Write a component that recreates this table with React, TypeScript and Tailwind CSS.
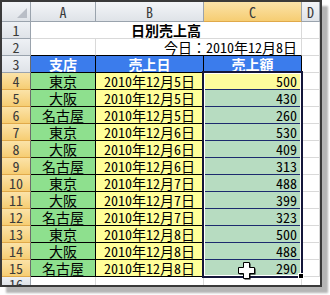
import React from 'react';

type Row = { n: number; shop: string; date: string; amount: number };

const rows: Row[] = [
  { n: 4, shop: '東京', date: '2010年12月5日', amount: 500 },
  { n: 5, shop: '大阪', date: '2010年12月5日', amount: 430 },
  { n: 6, shop: '名古屋', date: '2010年12月5日', amount: 260 },
  { n: 7, shop: '東京', date: '2010年12月6日', amount: 530 },
  { n: 8, shop: '大阪', date: '2010年12月6日', amount: 409 },
  { n: 9, shop: '名古屋', date: '2010年12月6日', amount: 313 },
  { n: 10, shop: '東京', date: '2010年12月7日', amount: 488 },
  { n: 11, shop: '大阪', date: '2010年12月7日', amount: 399 },
  { n: 12, shop: '名古屋', date: '2010年12月7日', amount: 323 },
  { n: 13, shop: '東京', date: '2010年12月8日', amount: 500 },
  { n: 14, shop: '大阪', date: '2010年12月8日', amount: 488 },
  { n: 15, shop: '名古屋', date: '2010年12月8日', amount: 290 },
];

const colHead = 'flex items-center justify-center border-r border-b border-[#9aa3ad] bg-gradient-to-b from-[#f3f5f8] to-[#dfe3e8] text-[#3a3a3a] text-[14px]';
const rowHead = 'flex items-center justify-center border-r border-b border-[#9aa3ad] bg-gradient-to-b from-[#eef1f5] to-[#dfe3e8] text-[#3a3a3a] text-[14px]';
const rowHeadSel = 'flex items-center justify-center border-r border-b border-r-[#6b6b6b] border-b-[#e0a94a] bg-gradient-to-b from-[#fbe3a8] to-[#f6cd72] text-[#3a3a3a] text-[14px]';
const grid = 'border-r border-b border-[#d9d9d9] bg-white';

const App: React.FC = () => {
  return (
    <div className="w-[330px] h-[295px] bg-white overflow-hidden [font-family:'Noto_Sans_CJK_JP',sans-serif] [font-feature-settings:'hwid'] leading-none text-black">
      <div className="w-[322px] h-[287px] border-2 border-[#3a3a3a] shadow-[6px_6px_2px_#b5b5b5] bg-white overflow-hidden">
        <div className="relative grid grid-cols-[29px_65px_108px_98px_18px] grid-rows-[20px_repeat(15,17px)_8px] overflow-hidden">
          {/* column headers */}
          <div className="relative border-r border-b border-[#9aa3ad] bg-gradient-to-b from-[#f3f5f8] to-[#dfe3e8]">
            <svg className="absolute right-[3px] bottom-[3px]" width="10" height="10" viewBox="0 0 10 10">
              <polygon points="10,0 10,10 0,10" fill="#b9bec6" />
            </svg>
          </div>
          <div className={colHead}>A</div>
          <div className={colHead}>B</div>
          <div className="flex items-center justify-center border-r border-b border-r-[#9aa3ad] border-b-[#e0a94a] bg-gradient-to-b from-[#fbe3a8] to-[#f6cd72] text-[#3a3a3a] text-[14px]">C</div>
          <div className={colHead}>D</div>

          {/* row 1 */}
          <div className={rowHead}>1</div>
          <div className={`${grid} col-span-3 flex items-center justify-center font-bold text-[14px]`}>日別売上高</div>
          <div className={grid}></div>

          {/* row 2 */}
          <div className={rowHead}>2</div>
          <div className="border-r border-r-[#d9d9d9] border-b border-b-black bg-white"></div>
          <div className="col-span-2 border-r border-r-[#d9d9d9] border-b border-b-black bg-white flex items-center justify-end pr-[4px] text-[14px]">
            今日<span className="[font-feature-settings:normal]">：</span>2010年12月8日
          </div>
          <div className={grid}></div>

          {/* row 3 */}
          <div className={`${rowHead} border-r-[#6b6b6b]`}>3</div>
          <div className="border-r border-b border-black bg-[#3b7cec] text-white font-bold text-[14px] flex items-center justify-center">支店</div>
          <div className="border-r border-b border-black bg-[#3b7cec] text-white font-bold text-[14px] flex items-center justify-center">売上日</div>
          <div className="border-r border-b border-black bg-[#3b7cec] text-white font-bold text-[14px] flex items-center justify-center">売上額</div>
          <div className={grid}></div>

          {rows.map((r, i) => (
            <React.Fragment key={r.n}>
              <div className={rowHeadSel}>{r.n}</div>
              <div className="border-r border-b border-black bg-[#8ee08e] text-[14px] flex items-center justify-center">{r.shop}</div>
              <div className="border-r border-b border-black bg-[#ffff99] text-[14px] flex items-center justify-center">{r.date}</div>
              <div className={`border-r border-b border-[#1c2a6e] text-[14px] flex items-center justify-end pr-[4px] ${i === 0 ? 'bg-[#fdfb9c]' : 'bg-[#b7dcc1]'}`}>{r.amount}</div>
              <div className={grid}></div>
            </React.Fragment>
          ))}

          {/* row 16, cut off by the window edge */}
          <div className="flex justify-center border-r border-[#9aa3ad] bg-gradient-to-b from-[#eef1f5] to-[#dfe3e8] text-[#3a3a3a] text-[14px] overflow-hidden">
            <span className="leading-[14px]">16</span>
          </div>
          <div className="border-r border-[#d9d9d9] bg-white"></div>
          <div className="border-r border-[#d9d9d9] bg-white"></div>
          <div className="border-r border-[#d9d9d9] bg-white"></div>
          <div className="bg-white"></div>

          {/* selection outline on C4:C15 */}
          <div className="absolute left-[200px] top-[69px] w-[101px] h-[207px] border-2 border-[#14163a] pointer-events-none">
            <div className="w-full h-full border border-white"></div>
          </div>
          <div className="absolute left-[296px] top-[271px] w-[6px] h-[6px] bg-black border border-white"></div>

          {/* mouse cursor */}
          <svg className="absolute left-[235px] top-[259px]" width="19" height="19" viewBox="0 0 19 19">
            <path d="M6.5 1.5 h6 v5 h5 v6 h-5 v5 h-6 v-5 h-5 v-6 h5 z" fill="#000" transform="translate(1 1)" />
            <path d="M6.5 1.5 h6 v5 h5 v6 h-5 v5 h-6 v-5 h-5 v-6 h5 z" fill="#fff" stroke="#000" strokeWidth="1" />
          </svg>
        </div>
      </div>
    </div>
  );
};

export default App;
